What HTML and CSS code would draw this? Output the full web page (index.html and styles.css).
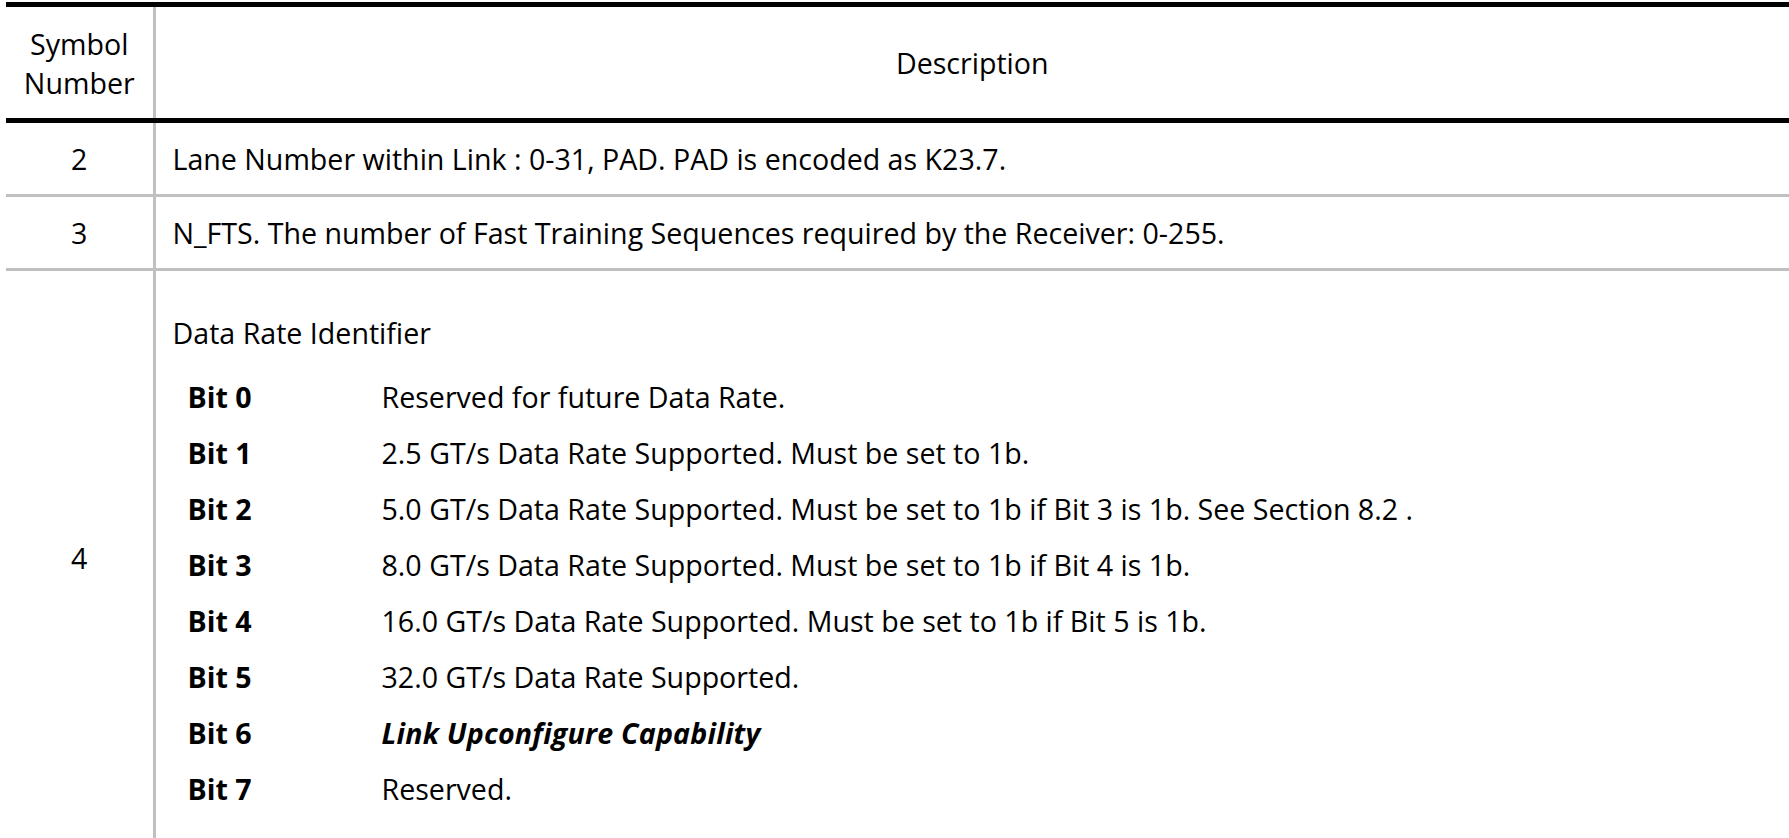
FILE: index.html
```html
<!DOCTYPE html>
<html lang="en">
<head>
<meta charset="utf-8">
<title>Symbol Number Description</title>
<link rel="stylesheet" href="styles.css">
</head>
<body>
<div class="page">
  <table class="spec">
    <thead>
      <tr>
        <th class="num">Symbol<br>Number</th>
        <th class="desc">Description</th>
      </tr>
    </thead>
    <tbody>
      <tr class="row-short">
        <td class="num">2</td>
        <td class="desc">Lane Number within Link : 0-31, PAD. PAD is encoded as K23.7.</td>
      </tr>
      <tr class="row-short">
        <td class="num">3</td>
        <td class="desc">N_FTS. The number of Fast Training Sequences required by the Receiver: 0-255.</td>
      </tr>
      <tr class="row-long">
        <td class="num">4</td>
        <td class="desc desc-long">
          <p class="intro">Data Rate Identifier</p>
          <dl class="bits">
            <div class="bit"><dt>Bit 0</dt><dd>Reserved for future Data Rate.</dd></div>
            <div class="bit"><dt>Bit 1</dt><dd>2.5 GT/s Data Rate Supported. Must be set to 1b.</dd></div>
            <div class="bit"><dt>Bit 2</dt><dd>5.0 GT/s Data Rate Supported. Must be set to 1b if Bit 3 is 1b. See Section 8.2 .</dd></div>
            <div class="bit"><dt>Bit 3</dt><dd>8.0 GT/s Data Rate Supported. Must be set to 1b if Bit 4 is 1b.</dd></div>
            <div class="bit"><dt>Bit 4</dt><dd>16.0 GT/s Data Rate Supported. Must be set to 1b if Bit 5 is 1b.</dd></div>
            <div class="bit"><dt>Bit 5</dt><dd>32.0 GT/s Data Rate Supported.</dd></div>
            <div class="bit"><dt>Bit 6</dt><dd class="emph">Link Upconfigure Capability</dd></div>
            <div class="bit"><dt>Bit 7</dt><dd>Reserved.</dd></div>
          </dl>
        </td>
      </tr>
    </tbody>
  </table>
</div>
</body>
</html>
```

FILE: styles.css
```css
html, body {
  margin: 0;
  padding: 0;
  background: #ffffff;
  overflow: hidden;
}

body {
  font-family: "Open Sans", "Lato", "Liberation Sans", sans-serif;
  font-size: 28.6px;
  line-height: 39px;
  color: #000000;
}

.page {
  padding: 2px 0 0 6px;
}

.spec {
  border-collapse: collapse;
  width: 1783px;
  table-layout: fixed;
}

.spec th,
.spec td {
  padding: 0;
  font-weight: normal;
}

.spec th.num,
.spec td.num {
  width: 148px;
  text-align: center;
  vertical-align: middle;
  border-right: 3px solid #c0c0c0;
}

.spec thead tr {
  border-top: 5px solid #000000;
  border-bottom: 5px solid #000000;
}

.spec thead th {
  height: 116px;
  box-sizing: border-box;
}

.spec th.desc {
  text-align: center;
}

.spec tbody tr + tr {
  border-top: 3px solid #c0c0c0;
}

.row-short td {
  height: 71px;
}

.spec td.desc {
  padding-left: 17px;
  text-align: left;
  vertical-align: middle;
}

.spec td.desc-long {
  padding-top: 42px;
  padding-bottom: 28px;
  vertical-align: top;
}

.intro {
  margin: 0 0 16px 0;
}

.bits {
  margin: 0;
  padding-left: 15px;
  display: flex;
  flex-direction: column;
}

.bit {
  display: flex;
  align-items: center;
  height: 56px;
}

.bit dt {
  width: 194px;
  font-weight: bold;
}

.bit dd {
  margin: 0;
}

.bit dd.emph {
  font-weight: bold;
  font-style: italic;
  letter-spacing: 0.2px;
}
```
